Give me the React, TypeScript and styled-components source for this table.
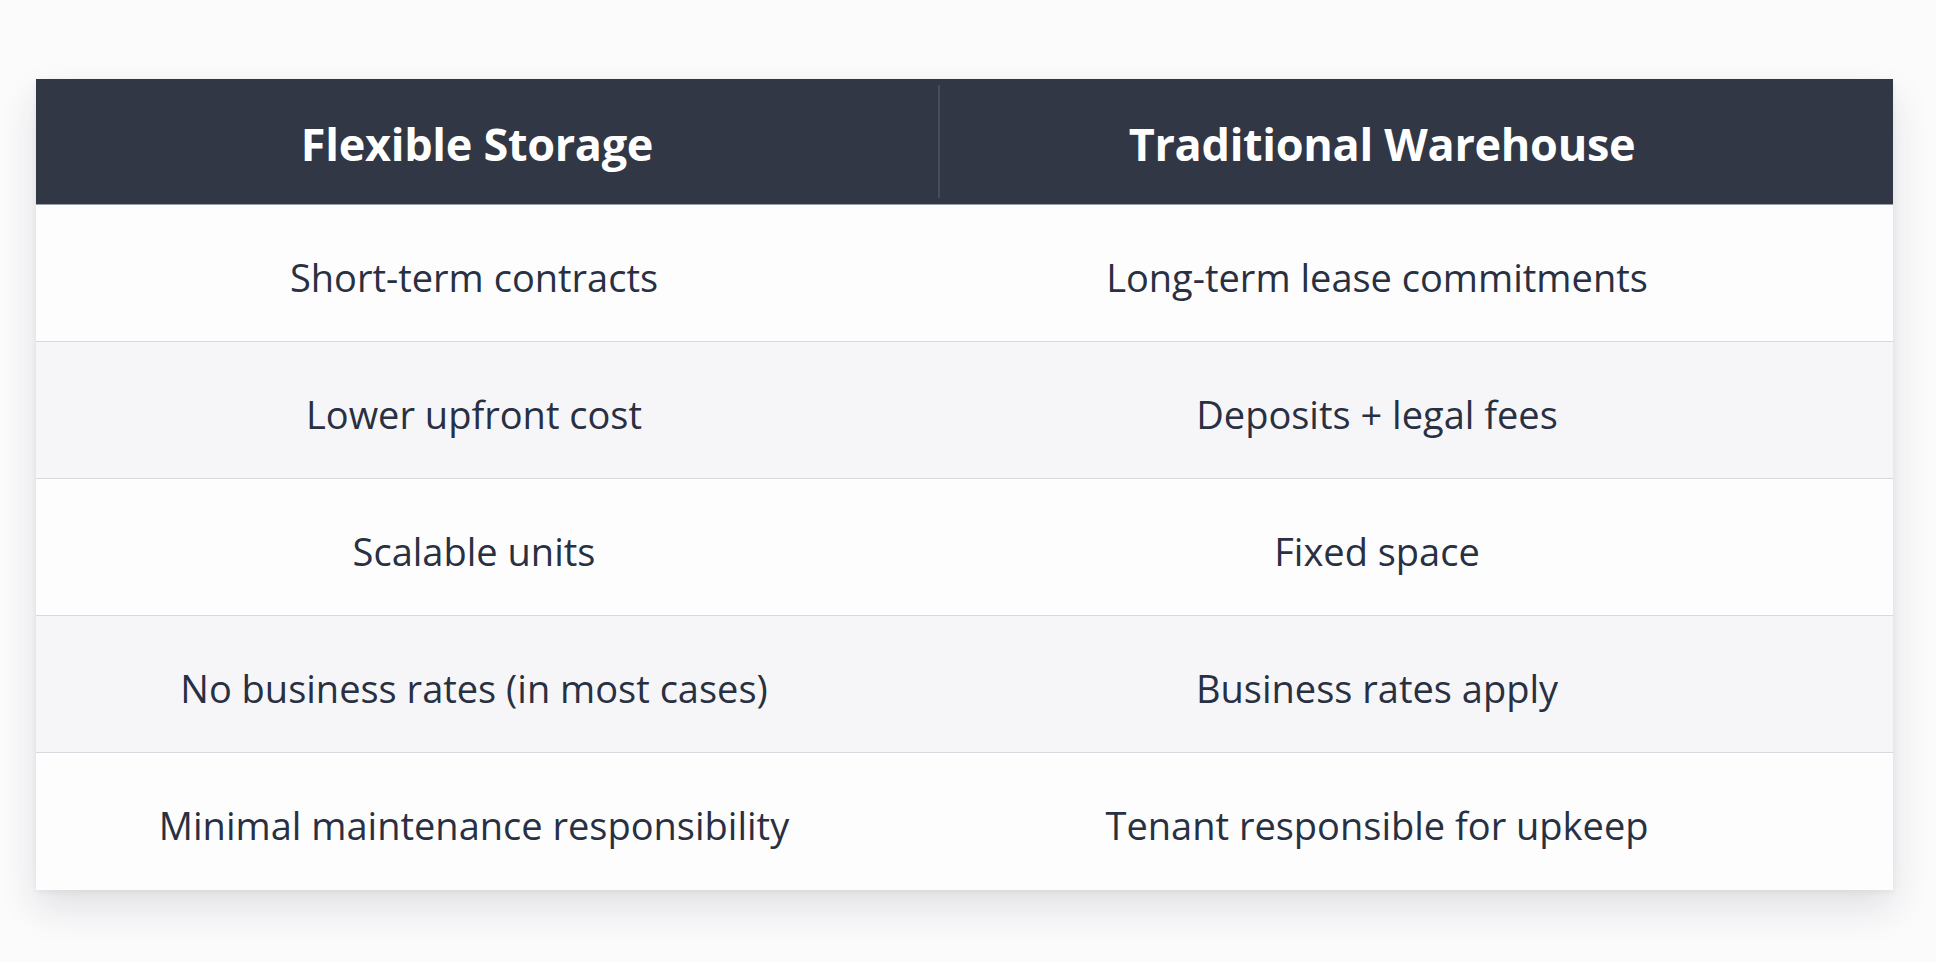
import styled, { createGlobalStyle } from 'styled-components';

const GlobalStyle = createGlobalStyle`
  html, body {
    margin: 0;
    padding: 0;
    background: #fbfbfc;
  }

  body {
    font-family: 'Open Sans', 'Noto Sans', sans-serif;
    -webkit-font-smoothing: antialiased;
  }
`;

const Page = styled.main`
  min-height: 962px;
  box-sizing: border-box;
  padding: 79px 43px 0 36px;
`;

const Table = styled.section`
  background: #ffffff;
  box-shadow: 0 18px 36px rgba(30, 35, 50, 0.12), 0 2px 6px rgba(30, 35, 50, 0.06);
`;

const HeaderRow = styled.div`
  display: grid;
  grid-template-columns: 902px 1fr;
  height: 125px;
  background: #313745;
  border-bottom: 1px solid #9aa0aa;
`;

const HeaderCell = styled.div<{ $shift: number; $divider?: boolean }>`
  display: flex;
  align-items: center;
  justify-content: center;
  padding-top: 4px;
  padding-right: ${({ $shift }) => $shift}px;
  color: #ffffff;
  font-size: 45px;
  font-weight: 700;
  letter-spacing: -0.3px;
  position: relative;

  ${({ $divider }) =>
    $divider &&
    `
    &::before {
      content: '';
      position: absolute;
      left: 0;
      top: 6px;
      bottom: 6px;
      width: 2px;
      background: #454c5b;
    }
  `}
`;

const Row = styled.div<{ $alt: boolean }>`
  display: grid;
  grid-template-columns: 902px 1fr;
  box-sizing: border-box;
  height: 137px;
  background: ${({ $alt }) => ($alt ? '#f6f6f8' : '#fdfdfe')};
  border-bottom: 1px solid #d6d9de;

  &:last-child {
    border-bottom: none;
  }
`;

const Cell = styled.div<{ $shift: number }>`
  display: flex;
  align-items: center;
  justify-content: center;
  padding-top: 7px;
  padding-right: ${({ $shift }) => $shift}px;
  color: #283042;
  font-size: 38px;
`;

const rows: [string, string][] = [
  ['Short-term contracts', 'Long-term lease commitments'],
  ['Lower upfront cost', 'Deposits + legal fees'],
  ['Scalable units', 'Fixed space'],
  ['No business rates (in most cases)', 'Business rates apply'],
  ['Minimal maintenance responsibility', 'Tenant responsible for upkeep'],
];

export default function App() {
  return (
    <>
      <GlobalStyle />
      <Page>
        <Table>
          <HeaderRow>
            <HeaderCell $shift={20}>Flexible Storage</HeaderCell>
            <HeaderCell $shift={67} $divider>
              Traditional Warehouse
            </HeaderCell>
          </HeaderRow>
          {rows.map(([flexible, traditional], i) => (
            <Row key={flexible} $alt={i % 2 === 1}>
              <Cell $shift={26}>{flexible}</Cell>
              <Cell $shift={77}>{traditional}</Cell>
            </Row>
          ))}
        </Table>
      </Page>
    </>
  );
}
